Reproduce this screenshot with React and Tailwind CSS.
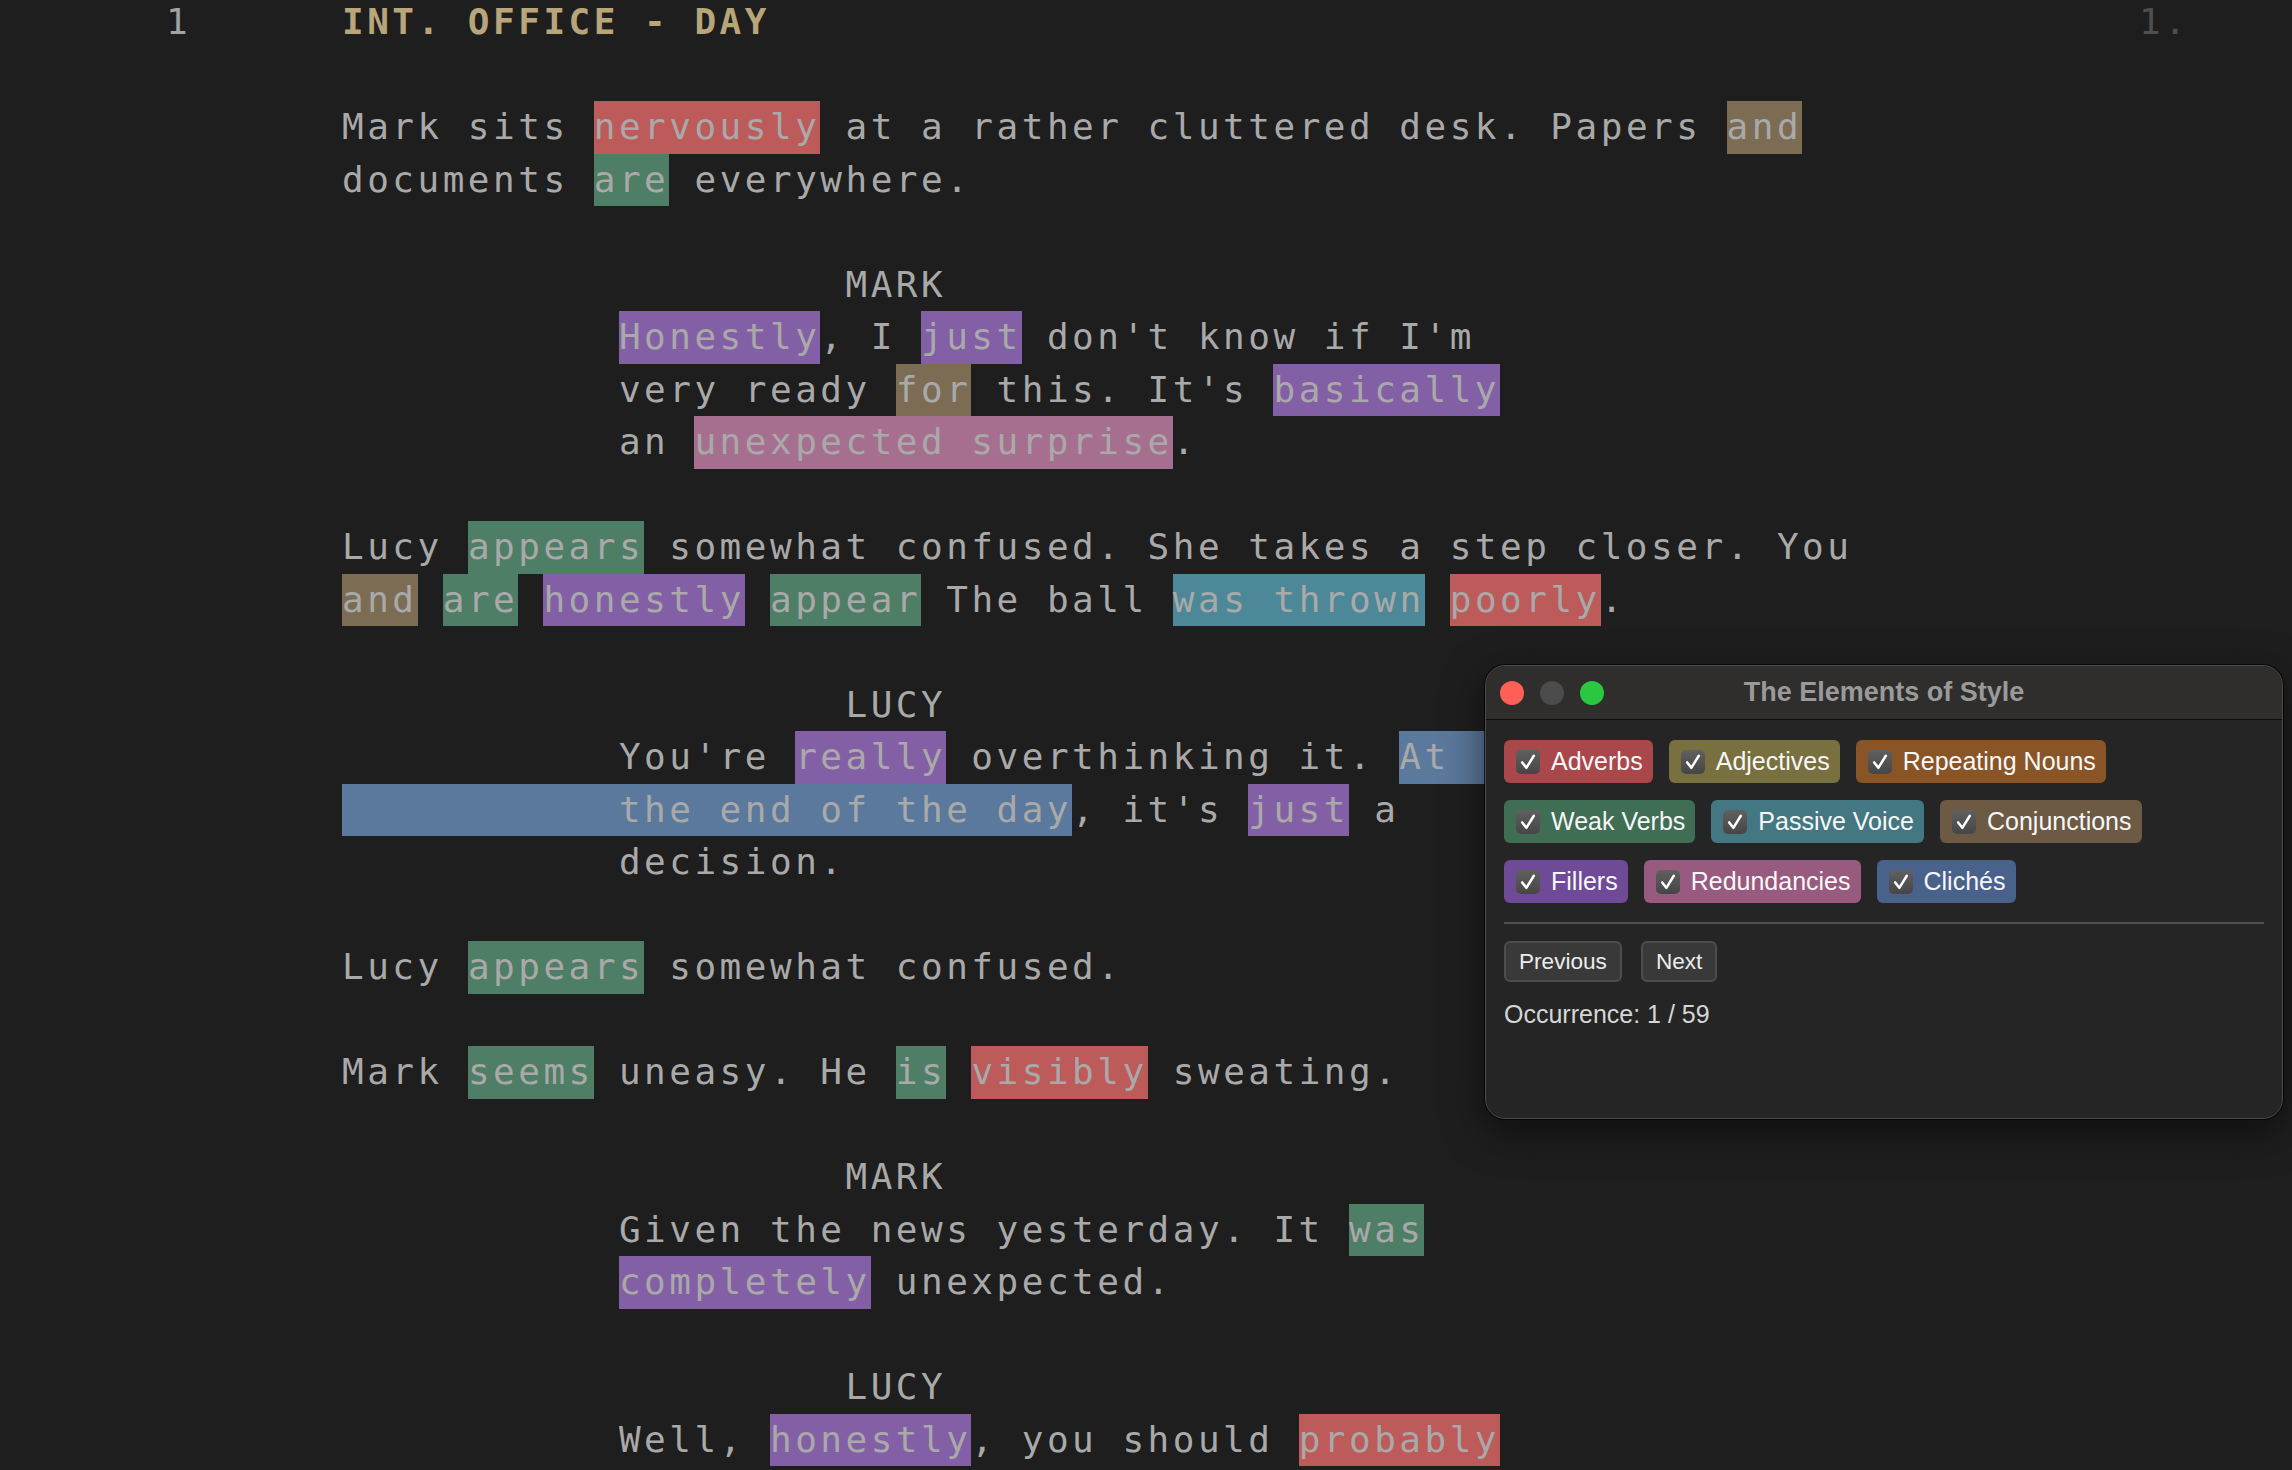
const ADV = 'bg-[#bd5b5a]'
const WEAK = 'bg-[#4e7e65]'
const CONJ = 'bg-[#7d6c54]'
const FILL = 'bg-[#8360a6]'
const REDUN = 'bg-[#a76f8f]'
const PASS = 'bg-[#4d8899]'
const CLICHE = 'bg-[#5b799c]'

const D = '           ' // dialogue indent, 11 cols
const C = '                    ' // character indent, 20 cols

// each line: array of plain strings or [text, highlight]
const lines = [
  null, // scene heading, drawn separately
  [],
  ['Mark sits ', ['nervously', ADV], ' at a rather cluttered desk. Papers ', ['and', CONJ]],
  ['documents ', ['are', WEAK], ' everywhere.'],
  [],
  [C + 'MARK'],
  [D, ['Honestly', FILL], ', I ', ['just', FILL], " don't know if I'm"],
  [D + 'very ready ', ['for', CONJ], " this. It's ", ['basically', FILL]],
  [D + 'an ', ['unexpected surprise', REDUN], '.'],
  [],
  ['Lucy ', ['appears', WEAK], ' somewhat confused. She takes a step closer. You'],
  [['and', CONJ], ' ', ['are', WEAK], ' ', ['honestly', FILL], ' ', ['appear', WEAK], ' The ball ', ['was thrown', PASS], ' ', ['poorly', ADV], '.'],
  [],
  [C + 'LUCY'],
  [D + "You're ", ['really', FILL], ' overthinking it. ', ['At', CLICHE, true]],
  [[D + 'the end of the day', CLICHE], ", it's ", ['just', FILL], ' a'],
  [D + 'decision.'],
  [],
  ['Lucy ', ['appears', WEAK], ' somewhat confused.'],
  [],
  ['Mark ', ['seems', WEAK], ' uneasy. He ', ['is', WEAK], ' ', ['visibly', ADV], ' sweating.'],
  [],
  [C + 'MARK'],
  [D + 'Given the news yesterday. It ', ['was', WEAK]],
  [D, ['completely', FILL], ' unexpected.'],
  [],
  [C + 'LUCY'],
  [D + 'Well, ', ['honestly', FILL], ', you should ', ['probably', ADV]],
]

const chipRows = [
  [
    { label: 'Adverbs', bg: 'bg-[#a9474a]' },
    { label: 'Adjectives', bg: 'bg-[#78703f]' },
    { label: 'Repeating Nouns', bg: 'bg-[#8a5526]' },
  ],
  [
    { label: 'Weak Verbs', bg: 'bg-[#3f6e55]' },
    { label: 'Passive Voice', bg: 'bg-[#437883]' },
    { label: 'Conjunctions', bg: 'bg-[#6c5a45]' },
  ],
  [
    { label: 'Fillers', bg: 'bg-[#6f4a97]' },
    { label: 'Redundancies', bg: 'bg-[#985a7e]' },
    { label: 'Clichés', bg: 'bg-[#49628c]' },
  ],
]

function ScriptLine({ segs }) {
  return (
    <div className="flex h-[52.5px] leading-[52.5px]">
      <div className="w-[342px] shrink-0" />
      <div className="whitespace-pre text-[#a9a9a9]">
        {segs.map((s, i) =>
          typeof s === 'string' ? (
            <span key={i}>{s}</span>
          ) : (
            <span key={i} className={`inline-block ${s[1]} ${s[2] ? 'pr-[160px]' : ''}`}>
              {s[0]}
            </span>
          )
        )}
      </div>
    </div>
  )
}

function Chip({ label, bg }) {
  return (
    <div className={`flex h-[43px] items-center rounded-[6px] pl-[12px] pr-[10px] ${bg}`}>
      <span className="flex h-[24px] w-[24px] items-center justify-center rounded-[5px] bg-linear-to-b from-[#606060] to-[#464646]">
        <svg width="20" height="20" viewBox="0 0 24 24" fill="none">
          <path d="M5 12.5 L10 19 L19 4.5" stroke="white" strokeWidth="3" strokeLinecap="round" strokeLinejoin="round" />
        </svg>
      </span>
      <span className="ml-[11px] text-[25px] leading-none text-[#f7f7f7]">{label}</span>
    </div>
  )
}

function StylePanel() {
  return (
    <div className="absolute left-[1485px] top-[665px] flex h-[454px] w-[798px] flex-col overflow-hidden rounded-[20px] border border-[#4a4a4a] bg-[#252525] font-['Liberation_Sans',Arial,sans-serif] tracking-normal shadow-[0_12px_40px_rgba(0,0,0,0.55)] ring-1 ring-black/70">
      {/* title bar */}
      <div className="grid h-[54px] shrink-0 grid-cols-[1fr_auto_1fr] items-center border-b border-[#0f0f0f] bg-[#2f2e2d] px-[14px]">
        <div className="flex gap-[16px]">
          <span className="h-[24px] w-[24px] rounded-full bg-[#fe5f57]" />
          <span className="h-[24px] w-[24px] rounded-full bg-[#4c4c4c]" />
          <span className="h-[24px] w-[24px] rounded-full bg-[#2ac840]" />
        </div>
        <div className="text-[27px] font-bold text-[#9a9a9a]">The Elements of Style</div>
        <div />
      </div>

      <div className="flex flex-col px-[18px] pt-[20px]">
        <div className="flex flex-col gap-[17px]">
          {chipRows.map((row, i) => (
            <div key={i} className="flex gap-[16px]">
              {row.map((c) => (
                <Chip key={c.label} {...c} />
              ))}
            </div>
          ))}
        </div>

        <div className="mt-[19px] h-[2px] bg-[#4f4f4f]" />

        <div className="mt-[17px] flex gap-[19px]">
          <button className="h-[41px] rounded-[6px] border-2 border-[#4d4d4d] bg-[#393939] px-[13px] text-[22.6px] text-[#ececec]">
            Previous
          </button>
          <button className="h-[41px] rounded-[6px] border-2 border-[#4d4d4d] bg-[#393939] px-[13px] text-[22.6px] text-[#ececec]">
            Next
          </button>
        </div>

        <div className="mt-[14px] text-[25px] text-[#d6d6d6]">Occurrence: 1 / 59</div>
      </div>
    </div>
  )
}

export default function App() {
  return (
    <div className="relative h-[1470px] w-[2292px] overflow-hidden bg-[#1e1e1e] font-['DejaVu_Sans_Mono',monospace] text-[36px] tracking-[3.5px]">
      <div className="-mt-[4px] flex flex-col">
        {/* scene heading row with line and page numbers */}
        <div className="flex h-[52.5px] leading-[52.5px]">
          <div className="w-[342px] shrink-0 pl-[166px] text-[#a3a3a3]">1</div>
          <div className="w-[1797px] shrink-0 whitespace-pre font-bold text-[#b8a57a]">INT. OFFICE - DAY</div>
          <div className="text-[#4e4e4e]">1.</div>
        </div>
        {lines.slice(1).map((segs, i) => (
          <ScriptLine key={i} segs={segs} />
        ))}
      </div>

      <StylePanel />
    </div>
  )
}
